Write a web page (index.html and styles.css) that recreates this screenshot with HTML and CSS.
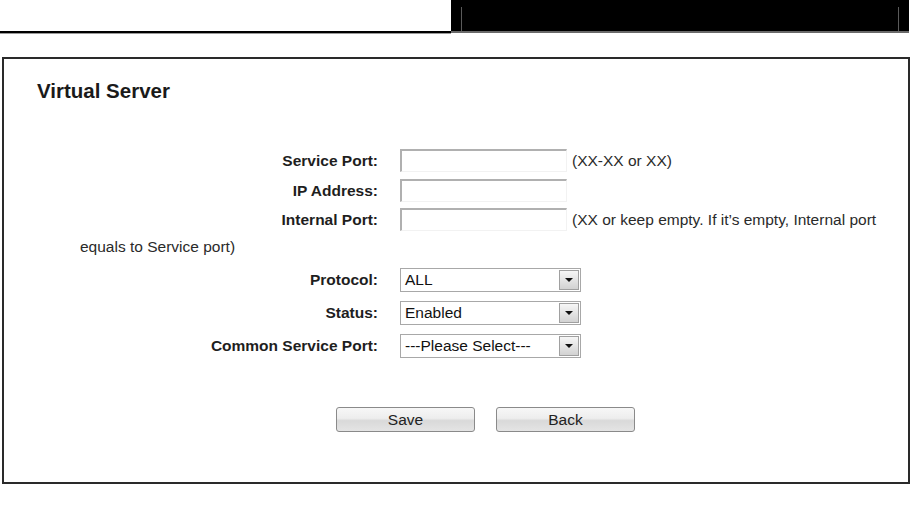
FILE: index.html
```html
<!DOCTYPE html>
<html lang="en">
<head>
<meta charset="utf-8">
<title>Virtual Server</title>
<link rel="stylesheet" href="styles.css">
</head>
<body>
<header class="topbar">
  <div class="rule-left"></div>
  <div class="black-tab"><div class="tab-inner"></div></div>
</header>

<main class="panel">
  <h1 class="title">Virtual Server</h1>
  <form class="form">
    <div class="row">
      <label class="label" for="sport">Service Port:</label><input class="field" id="sport" type="text"><span class="hint">(XX-XX or XX)</span>
    </div>
    <div class="row">
      <label class="label" for="ip">IP Address:</label><input class="field" id="ip" type="text">
    </div>
    <div class="row row-tight">
      <label class="label" for="iport">Internal Port:</label><input class="field" id="iport" type="text"><span class="hint">(XX or keep empty. If it’s empty, Internal port</span>
    </div>
    <div class="cont">equals to Service port)</div>
    <div class="row sel-row">
      <label class="label">Protocol:</label><span class="select"><span class="sel-val">ALL</span><span class="arrow"></span></span>
    </div>
    <div class="row sel-row">
      <label class="label">Status:</label><span class="select"><span class="sel-val">Enabled</span><span class="arrow"></span></span>
    </div>
    <div class="row sel-row">
      <label class="label">Common Service Port:</label><span class="select"><span class="sel-val">---Please Select---</span><span class="arrow"></span></span>
    </div>
    <div class="buttons">
      <button type="button" class="btn">Save</button>
      <button type="button" class="btn">Back</button>
    </div>
  </form>
</main>
</body>
</html>
```

FILE: styles.css
```css
html, body {
  margin: 0;
  padding: 0;
  background: #fff;
}

body {
  font-family: "Liberation Sans", Arial, sans-serif;
  color: #111;
  width: 918px;
  height: 505px;
  overflow: hidden;
}

.topbar {
  display: flex;
  height: 34px;
}

.rule-left {
  width: 451px;
  height: 31px;
  border-bottom: 2px solid #000;
  box-shadow: 0 1px 0 #9a9a9a;
}

.black-tab {
  width: 458px;
  height: 24px;
  padding-top: 7px;
  background: #000;
  border-bottom: 2px solid #6a6a6a;
}

.tab-inner {
  height: 24px;
  margin: 0 10px;
  border-left: 1px solid #5a5a5a;
  border-right: 1px solid #5a5a5a;
}

.panel {
  display: block;
  margin: 23px 0 0 2px;
  width: 908px;
  box-sizing: border-box;
  border: 2px solid #2a2a2a;
  padding: 20px 0 50px 0;
}

.title {
  margin: 0 0 0 33px;
  font-size: 20.5px;
  line-height: 24px;
  font-weight: bold;
  color: #1a1a1a;
}

.form {
  margin: 42px 0 0 0;
  padding-left: 76px;
  font-size: 15.5px;
}

.row {
  height: 30px;
  line-height: 30px;
  white-space: nowrap;
  color: #222;
}

.row-tight {
  height: 28px;
  line-height: 28px;
}

.label {
  display: inline-block;
  width: 298px;
  margin-right: 22px;
  text-align: right;
  font-weight: bold;
  vertical-align: middle;
  line-height: 20px;
  color: #1e1e1e;
}

.field {
  display: inline-block;
  box-sizing: border-box;
  width: 167px;
  height: 23px;
  margin: 0;
  padding: 0 3px;
  vertical-align: middle;
  border-top: 2px solid #b0b0b0;
  border-left: 2px solid #b0b0b0;
  border-right: 1px solid #f2f2f2;
  border-bottom: 1px solid #f2f2f2;
  background: #fff;
  font: inherit;
}

.hint {
  margin-left: 5px;
  vertical-align: middle;
  line-height: 20px;
  color: #2a2a2a;
}

.cont {
  height: 28px;
  line-height: 28px;
  color: #2a2a2a;
}

.sel-row {
  height: 33px;
  line-height: 33px;
}

.cont + .sel-row {
  margin-top: 1px;
}

.select {
  display: inline-flex;
  align-items: center;
  box-sizing: border-box;
  width: 181px;
  height: 24px;
  border: 1px solid #a8a8a8;
  background: #fff;
  vertical-align: middle;
  line-height: 22px;
}

.sel-val {
  flex: 1;
  padding-left: 4px;
  color: #111;
  white-space: nowrap;
  overflow: hidden;
}

.arrow {
  display: flex;
  align-items: center;
  justify-content: center;
  box-sizing: border-box;
  width: 20px;
  height: 20px;
  margin-right: 1px;
  border: 1px solid #a0a0a0;
  background: linear-gradient(#f6f6f6, #d2d2d2);
}

.arrow::before {
  content: "";
  display: block;
  width: 0;
  height: 0;
  border-left: 4px solid transparent;
  border-right: 4px solid transparent;
  border-top: 4px solid #111;
}

.buttons {
  display: flex;
  gap: 21px;
  margin: 46px 0 0 256px;
}

.btn {
  width: 139px;
  height: 25px;
  margin: 0;
  padding: 0;
  border: 1px solid #8a8a8a;
  border-radius: 3px;
  background: linear-gradient(#f7f7f7 0%, #ededed 45%, #d9d9d9 55%, #e4e4e4 100%);
  font-family: "Liberation Sans", Arial, sans-serif;
  font-size: 15.5px;
  color: #222;
}
```
